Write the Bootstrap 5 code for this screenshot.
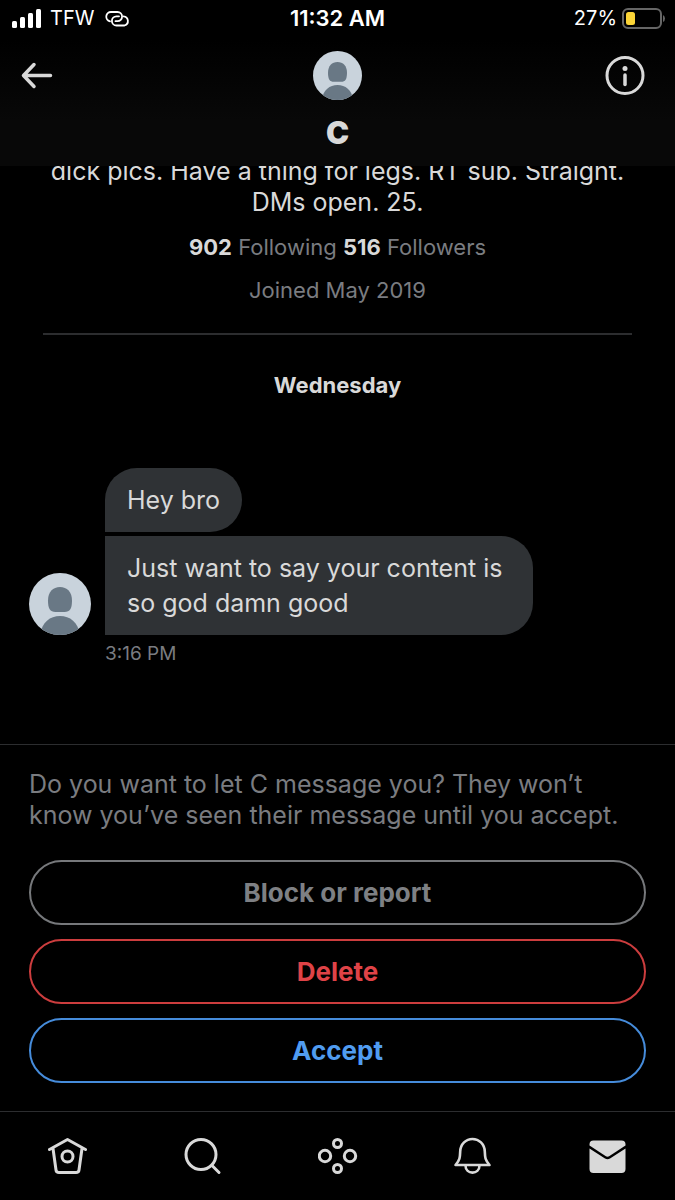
<!DOCTYPE html>
<html lang="en" data-bs-theme="dark">
<head>
<meta charset="utf-8">
<meta name="viewport" content="width=device-width, initial-scale=1">
<title>Message request</title>
<link href="https://cdn.jsdelivr.net/npm/bootstrap@5.3.0/dist/css/bootstrap.min.css" rel="stylesheet">
<style>
  body { background: #000; color: #d9d9d9; font-family: Inter, "Liberation Sans", sans-serif; font-size: 25px; line-height: 31px; }
  h1, h2, .count { color: #d9d9d9; }
  svg { display: block; flex: none; }
  .ink { fill: none; stroke: #d9d9d9; stroke-width: 3; stroke-linecap: round; stroke-linejoin: round; }
  .status-bar { height: 37px; padding: 0 10px; color: #fff; font-size: 20px; }
  .status-side { flex: 1 1 0; }
  .status-time { font-size: 22px; font-weight: 600; }
  .top-bar { background: linear-gradient(#000 40px, #080808 120px); height: 166px; }
  .title-row { padding: 14px 20px 0; }
  .info-icon { margin-right: 10px; }
  .icon-btn { background: none; border: 0; }
  .person-name { font-size: 31px; font-weight: 900; line-height: 36px; margin-top: 15px; }
  .thread { min-height: 0; }
  .profile { padding: 0 43px; }
  .stats, .joined { font-size: 22px; line-height: 30px; }
  .stats { margin-top: 14px; }
  .joined { margin-top: 13px; }
  .dim { color: #7a7c80; }
  .rule { border-top: 2px solid #2c2d2f; margin: 28px 0 0; opacity: 1; }
  .day { font-size: 22px; font-weight: 700; line-height: 30px; margin-top: 35px; }
  .messages { padding: 0 29px; margin-top: 68px; gap: 14px; }
  .bubble { background: #2f3235; padding: 15px 22px 14px; line-height: 35px; border-radius: 32px 32px 32px 0; }
  .bubble-next { border-top-left-radius: 0; margin-top: 4px; max-width: 428px; }
  .sent-at { font-size: 19px; line-height: 24px; margin: 7px 29px 78px 105px; }
  .request { border-top: 1px solid #2c2d2f; padding: 24px 29px 28px; }
  .choices { margin-top: 29px; gap: 14px; }
  .choice { --bs-btn-font-size: 26px; --bs-btn-font-weight: 700; --bs-btn-line-height: 31px; --bs-btn-padding-y: 15px; border-width: 2px; height: 65px; }
  .choice-block { color: #7e8084; border-color: #76787b; }
  .choice-delete { color: #df4347; border-color: #cc3d3e; }
  .choice-accept { color: #509cf0; border-color: #468cdb; }
  .tab-bar { border-top: 1px solid #2c2d2f; height: 89px; }
</style>
</head>
<body>
<div class="d-flex flex-column vh-100">
  <header class="top-bar flex-shrink-0">
    <div class="status-bar d-flex align-items-center">
      <div class="status-side d-flex align-items-center">
        <svg width="32" height="20" viewBox="0 0 32 20" fill="#fff" aria-hidden="true"><rect x="2" y="12" width="5" height="7" rx="1.500"/><rect x="10" y="8" width="5" height="11" rx="1.500"/><rect x="18" y="4" width="5" height="15" rx="1.500"/><rect x="26" y="0" width="5" height="19" rx="1.500"/></svg>
        <span class="ms-2">TFW</span>
        <svg class="ms-2" width="30" height="18" viewBox="0 0 30 18" fill="none" stroke="#fff" stroke-width="1.800" stroke-linecap="round" aria-hidden="true"><g transform="translate(2 0)"><path d="M6 11.300A4.700 4.700 0 0 1 7 2h6.500a4.600 4.600 0 0 1 0 9.200H11.500"/><path d="M19.500 6.300a4.700 4.700 0 0 1 1 9.200H12.500a4.600 4.600 0 0 1 0-9.200H15"/></g></svg>
      </div>
      <span class="status-time">11:32 AM</span>
      <div class="status-side d-flex align-items-center justify-content-end">
        <span class="me-1">27%</span>
        <svg width="44" height="22" viewBox="0 0 44 22" aria-hidden="true"><rect x="2" y="1" width="38" height="19" rx="5" fill="none" stroke="#666" stroke-width="2"/><rect x="5" y="4" width="9" height="13" rx="2.500" fill="#fbd437"/><path d="M42 7q2 1 2 3.500t-2 3.500z" fill="#666"/></svg>
      </div>
    </div>
    <div class="title-row d-flex justify-content-between">
      <button class="icon-btn status-side d-flex p-0 pt-2" aria-label="Back">
        <svg width="34" height="34" viewBox="0 0 34 34" aria-hidden="true"><path class="ink" style="stroke-width:3.500" d="M30.500 16.500H4M14 5.500L3.500 16.500l10.500 11"/></svg>
      </button>
      <div class="text-center">
        <svg class="mx-auto" width="49" height="49" viewBox="0 0 62 62" aria-hidden="true"><use href="#person"/></svg>
        <h1 class="person-name mb-0">C</h1>
      </div>
      <button class="icon-btn status-side d-flex justify-content-end p-0 pt-1" aria-label="Conversation info">
        <svg class="info-icon" width="40" height="40" viewBox="0 0 40 40" aria-hidden="true"><circle class="ink" cx="20" cy="20.500" r="18"/><circle cx="20" cy="13.500" r="2.500" fill="#d9d9d9"/><path d="M20 20v9.500" fill="none" stroke="#d9d9d9" stroke-width="3.500" stroke-linecap="round"/></svg>
      </button>
    </div>
  </header>

  <main class="thread flex-grow-1 d-flex flex-column justify-content-end overflow-hidden">
    <section class="profile text-center">
      <p class="mb-0">dick pics. Have a thing for legs. RT sub. Straight. DMs open. 25.</p>
      <p class="stats dim mb-0"><strong class="count">902</strong> Following <strong class="count">516</strong> Followers</p>
      <p class="joined dim mb-0">Joined May 2019</p>
      <hr class="rule">
      <h2 class="day mb-0">Wednesday</h2>
    </section>
    <section class="messages d-flex align-items-end">
      <svg width="62" height="62" viewBox="0 0 62 62" aria-hidden="true">
        <defs>
          <clipPath id="disc"><circle cx="31" cy="31" r="31"/></clipPath>
          <g id="person" clip-path="url(#disc)"><path fill="#c9d3dc" d="M0 0h62v62H0z"/><path fill="#697885" d="M31 14c7 0 12 5 12 13.500 0 8-2 11.500-7.500 11.500h-9C21 39 19 35.500 19 27.500 19 19 24 14 31 14z"/><path fill="#697885" d="M11 62c2-13 10-19 20-19s18 6 20 19z"/></g>
        </defs>
        <use href="#person"/>
      </svg>
      <div class="d-flex flex-column align-items-start">
        <div class="bubble">Hey bro</div>
        <div class="bubble bubble-next">Just want to say your content is so god damn good</div>
      </div>
    </section>
    <time class="sent-at dim d-block">3:16 PM</time>
  </main>

  <section class="request flex-shrink-0">
    <p class="dim mb-0">Do you want to let C message you? They won’t know you’ve seen their message until you accept.</p>
    <div class="choices d-grid">
      <button class="btn choice choice-block rounded-pill">Block or report</button>
      <button class="btn choice choice-delete rounded-pill">Delete</button>
      <button class="btn choice choice-accept rounded-pill">Accept</button>
    </div>
  </section>

  <nav class="tab-bar nav nav-fill flex-nowrap align-items-center flex-shrink-0" aria-label="Main">
    <a class="nav-item" href="#" aria-label="Home"><svg class="mx-auto" width="40" height="40" viewBox="0 0 40 40"><path class="ink" d="M1.500 13.500L19.500 3.500l18 10M5 12.500l3 21.500q.3 2.500 3 2.500h17q2.700 0 3-2.500l3-21.500"/><circle class="ink" cx="19.500" cy="20.500" r="5.500"/></svg></a>
    <a class="nav-item" href="#" aria-label="Search"><svg class="mx-auto" width="40" height="40" viewBox="0 0 40 40"><circle class="ink" cx="18" cy="18.500" r="15"/><path class="ink" d="M29 29.500l7 7"/></svg></a>
    <a class="nav-item" href="#" aria-label="Spaces"><svg class="mx-auto" width="40" height="40" viewBox="0 0 40 40"><g class="ink"><circle cx="19.500" cy="7.500" r="4"/><circle cx="19.500" cy="32.500" r="4"/><circle cx="7" cy="20" r="5.700"/><circle cx="32" cy="20" r="5.700"/></g></svg></a>
    <a class="nav-item" href="#" aria-label="Notifications"><svg class="mx-auto" width="40" height="40" viewBox="0 0 40 40"><path class="ink" style="stroke-width:2.600" d="M2.500 29C7 24 7 21 7.200 15.500 7.500 8 13 3 19.500 3S31.500 8 31.800 15.500C32 21 32 24 36.500 29zM12.500 29.500c0 9.500 14 9.500 14 0"/></svg></a>
    <a class="nav-item" href="#" aria-label="Messages"><svg class="mx-auto" width="40" height="40" viewBox="0 0 40 40" fill="#d9d9d9"><path d="M1.500 8.500q0-4 4-4h28q4 0 4 4V9.500L21.500 20q-2 1.300-4 0L1.500 9.500z"/><path d="M1.500 12.500L17 22.500q2.500 1.500 5 0L37.500 12.500V33q0 4-4 4h-28q-4 0-4-4z"/></svg></a>
  </nav>
</div>
<script src="https://cdn.jsdelivr.net/npm/bootstrap@5.3.0/dist/js/bootstrap.bundle.min.js"></script>
</body>
</html>
